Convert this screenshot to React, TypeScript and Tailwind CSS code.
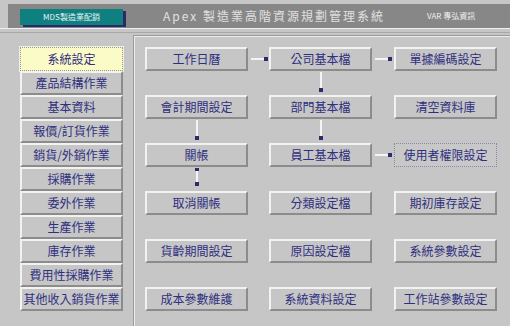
import React from 'react';

const FONT = { fontFamily: '"Noto Sans CJK TC", "Noto Sans CJK SC", "Liberation Sans", sans-serif' };

const MENU = [
  '系統設定',
  '產品結構作業',
  '基本資料',
  '報價/訂貨作業',
  '銷貨/外銷作業',
  '採購作業',
  '委外作業',
  '生產作業',
  '庫存作業',
  '費用性採購作業',
  '其他收入銷貨作業',
];

// raised 3D button look
const raised =
  'border-t-2 border-l-2 border-b-2 border-r-2 border-t-[#f2f2f2] border-l-[#f2f2f2] border-b-[#8c8c8c] border-r-[#8c8c8c]';

function SideButton({ label, active }: { label: string; active?: boolean }) {
  if (active) {
    return (
      <div className="h-[24px] w-[103px] flex items-center justify-center bg-[#fbfbc8] border border-dotted border-[#9a9a7a] outline outline-1 outline-[#eeeeee] text-[12px] text-[#2f2f7f]">
        {label}
      </div>
    );
  }
  return (
    <div className={`h-[24px] w-[103px] flex items-center justify-center bg-[#c6c6c6] text-[12px] text-[#2f2f7f] ${raised}`}>
      {label}
    </div>
  );
}

function Btn({ label, focus }: { label: string; focus?: boolean }) {
  if (focus) {
    return (
      <div className="h-[24px] w-[103px] flex items-center justify-center bg-[#c8c8c8] border border-dotted border-[#8888a8] text-[12px] text-[#2f2f7f]">
        {label}
      </div>
    );
  }
  return (
    <div className={`h-[24px] w-[103px] flex items-center justify-center bg-[#c6c6c6] text-[12px] text-[#2f2f7f] ${raised}`}>
      {label}
    </div>
  );
}

function HLink() {
  return (
    <div className="flex items-center h-full pl-[3px]">
      <div className="h-[2px] w-[13px] bg-[#f4f4f4]" />
      <div className="h-[4px] w-[4px] bg-[#2c2c6c]" />
    </div>
  );
}

function VLink({ both }: { both?: boolean }) {
  return (
    <div className="flex flex-col items-center h-full pt-[1px]">
      {both && <div className="h-[3px] w-[4px] bg-[#2c2c6c]" />}
      <div className={`w-[2px] bg-[#f4f4f4] ${both ? 'h-[11px]' : 'h-[16px]'}`} />
      <div className="h-[4px] w-[4px] bg-[#2c2c6c]" />
    </div>
  );
}

const Empty = () => <div />;

export default function App() {
  return (
    <div className="w-[510px] h-[326px] bg-[#c6c6c6] overflow-hidden" style={FONT}>
      {/* Header */}
      <div className="pt-[4px] pl-[8px]">
        <div className="h-[24px] bg-[#878787] flex items-center">
          <div className="shrink-0 ml-[12px] mt-[1px] w-[103px] h-[16px] bg-[#0e8080] flex items-center justify-center shadow-[3px_2px_0_#2a2a6a]">
            <span className="text-[8px] text-[#e8f4f4]">MDS製造業配銷</span>
          </div>
          <div className="shrink-0 ml-[40px] text-[12px] text-[#e0e0e0] tracking-[2px] whitespace-nowrap">
            Apex 製造業高階資源規劃管理系統
          </div>
          <div className="shrink-0 ml-[42px] text-[8px] text-[#f0f0f0] whitespace-nowrap">VAR 專弘資訊</div>
        </div>
      </div>
      <div className="h-[1px] bg-[#f0f0f0]" />
      <div className="h-[3px]" />
      <div className="h-[1px] bg-[#a8a8a8]" />

      {/* Body */}
      <div className="flex mt-[2px]">
        <div className="w-[133px] pl-[20px] pt-[12px] flex flex-col">
          {MENU.map((m, i) => (
            <SideButton key={m} label={m} active={i === 0} />
          ))}
        </div>

        <div className="flex-1 h-[300px] border-t border-l border-t-[#9a9a9a] border-l-[#9a9a9a]">
          <div className="h-full border-t border-l border-t-[#ececec] border-l-[#ececec] pl-[10px] pt-[10px]">
            <div className="grid grid-cols-[103px_21px_103px_22px_103px] grid-rows-[24px_24px_24px_24px_24px_24px_24px_24px_24px_24px_24px]">
              {/* row 1 */}
              <Btn label="工作日曆" />
              <HLink />
              <Btn label="公司基本檔" />
              <HLink />
              <Btn label="單據編碼設定" />
              <Empty /><Empty /><VLink /><Empty /><Empty />
              {/* row 2 */}
              <Btn label="會計期間設定" />
              <Empty />
              <Btn label="部門基本檔" />
              <Empty />
              <Btn label="清空資料庫" />
              <VLink /><Empty /><VLink /><Empty /><Empty />
              {/* row 3 */}
              <Btn label="關帳" />
              <Empty />
              <Btn label="員工基本檔" />
              <HLink />
              <Btn label="使用者權限設定" focus />
              <VLink both /><Empty /><Empty /><Empty /><Empty />
              {/* row 4 */}
              <Btn label="取消關帳" />
              <Empty />
              <Btn label="分類設定檔" />
              <Empty />
              <Btn label="期初庫存設定" />
              <Empty /><Empty /><Empty /><Empty /><Empty />
              {/* row 5 */}
              <Btn label="貨齡期間設定" />
              <Empty />
              <Btn label="原因設定檔" />
              <Empty />
              <Btn label="系統參數設定" />
              <Empty /><Empty /><Empty /><Empty /><Empty />
              {/* row 6 */}
              <Btn label="成本參數維護" />
              <Empty />
              <Btn label="系統資料設定" />
              <Empty />
              <Btn label="工作站參數設定" />
            </div>
          </div>
        </div>
      </div>
    </div>
  );
}
